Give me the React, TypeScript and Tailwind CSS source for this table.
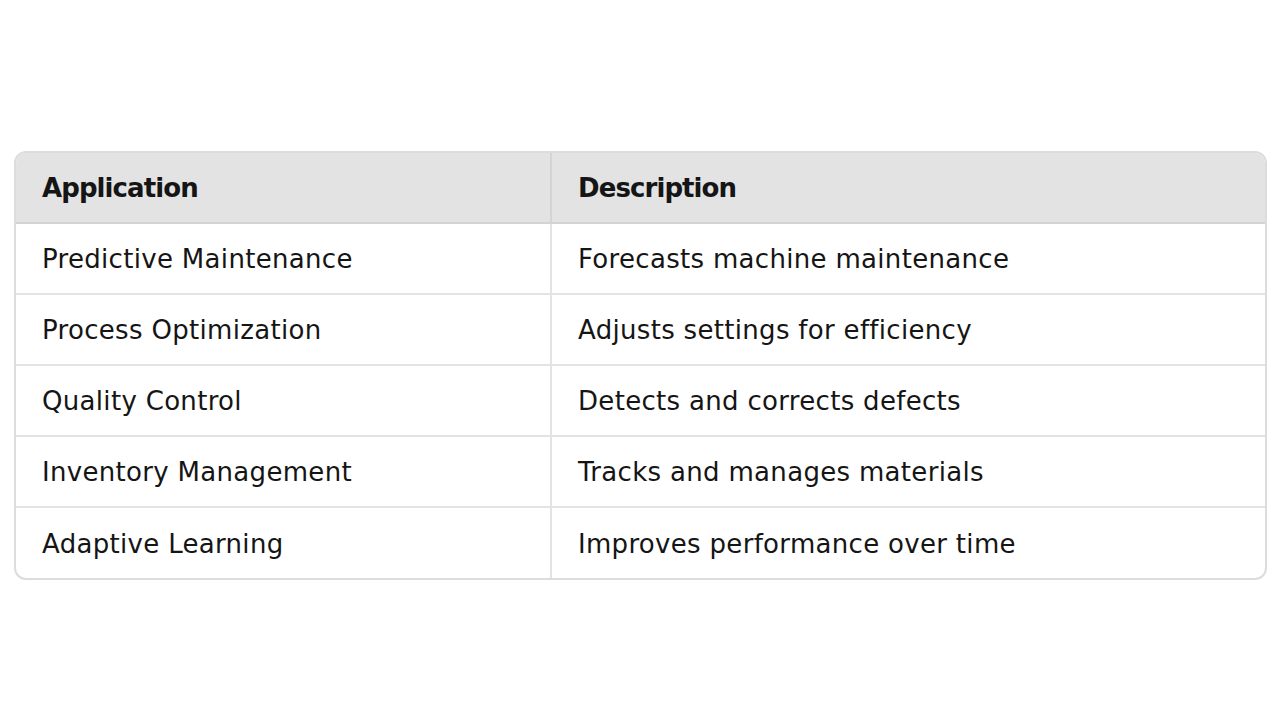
const rows = [
  ['Predictive Maintenance', 'Forecasts machine maintenance'],
  ['Process Optimization', 'Adjusts settings for efficiency'],
  ['Quality Control', 'Detects and corrects defects'],
  ['Inventory Management', 'Tracks and manages materials'],
  ['Adaptive Learning', 'Improves performance over time'],
];

export default function App() {
  return (
    <div className="w-[1280px] h-[720px] bg-white pt-[151px] px-[14px] font-['DejaVu_Sans',sans-serif] text-[#151515]">
      <div className="w-[1253px] border-2 border-[#dcdcdc] rounded-[12px] overflow-hidden">
        <table className="w-full border-collapse text-[26px] tracking-[0.012em]">
          <thead>
            <tr className="bg-[#e3e3e3] h-[70px]">
              <th className="w-[535px] text-left font-bold px-[26px] pt-[2px] border-r-2 border-[#d4d4d4] border-b-2 tracking-[-0.035em]">Application</th>
              <th className="text-left font-bold px-[26px] pt-[2px] border-b-2 border-[#d4d4d4] tracking-[-0.035em]">Description</th>
            </tr>
          </thead>
          <tbody>
            {rows.map(([app, desc], i) => (
              <tr key={app} className={`h-[71px] ${i < rows.length - 1 ? 'border-b-2 border-[#e3e3e3]' : ''}`}>
                <td className="px-[26px] pt-[2px] border-r-2 border-[#e3e3e3]">{app}</td>
                <td className="px-[26px] pt-[2px]">{desc}</td>
              </tr>
            ))}
          </tbody>
        </table>
      </div>
    </div>
  );
}
